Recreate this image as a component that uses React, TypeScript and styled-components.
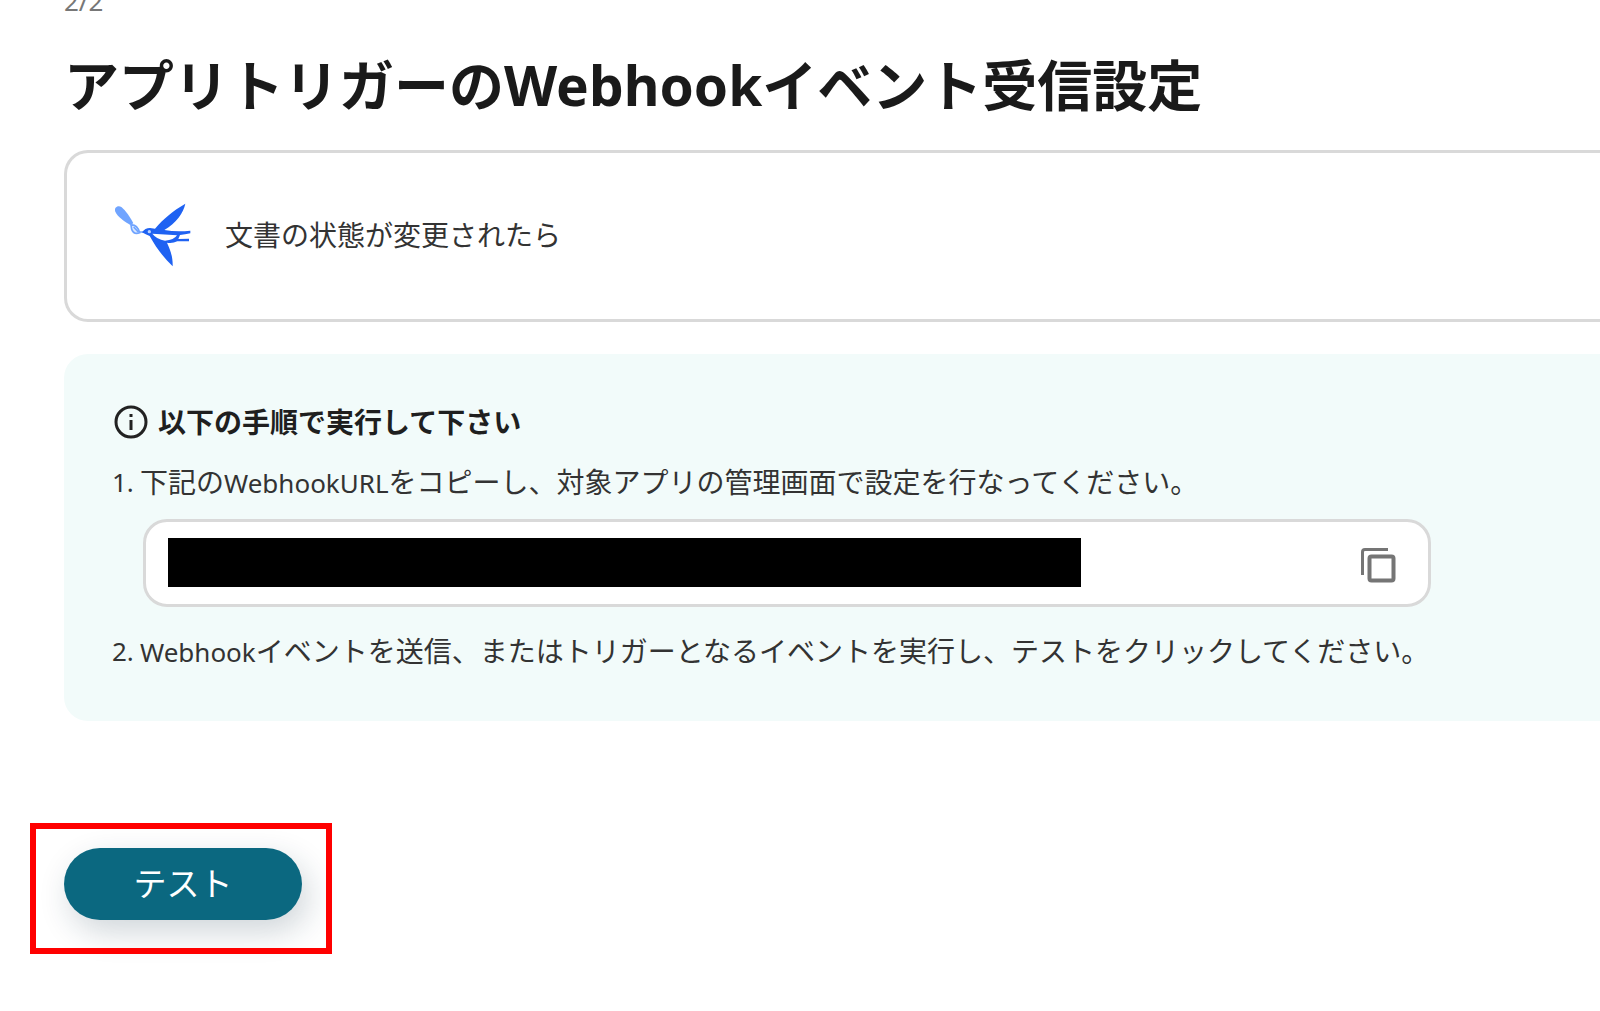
import React from "react";
import styled, { createGlobalStyle } from "styled-components";

const GlobalStyle = createGlobalStyle`
  *, *::before, *::after { box-sizing: border-box; }
  body {
    margin: 0;
    background: #fff;
    color: #333;
    font-family: "Noto Sans", "Noto Sans CJK JP", sans-serif;
    font-size: 28px;
    line-height: 40px;
  }
`;

const Page = styled.main`
  margin-top: -17px;
  padding: 0 0 64px 64px;
`;

const StepCount = styled.p`
  margin: 0;
  color: #777;
  font-size: 26px;
  line-height: 36px;
`;

const Title = styled.h1`
  margin: 30px 0 29px;
  color: #1a1a1a;
  font-size: 55px;
  font-weight: 700;
  line-height: 72px;
  white-space: nowrap;
`;

const Latin = styled.span`
  font-size: 26px;
`;

const TriggerCard = styled.section`
  display: flex;
  align-items: center;
  gap: 32px;
  padding: 48px 0 50px 46px;
  min-height: 171px;
  border: 3px solid #d9d9d9;
  border-right: 0;
  border-radius: 24px 0 0 24px;
`;

const Guide = styled.section`
  margin-top: 32px;
  padding: 48px 48px 49px 48px;
  border-radius: 24px 0 0 24px;
  background: #f2fbfa;
`;

const GuideHeading = styled.h2`
  display: flex;
  align-items: center;
  gap: 10px;
  margin: 0 0 20px;
  padding-left: 2px;
  color: #1f1f1f;
  font-size: 28px;
  font-weight: 700;
  line-height: 40px;
`;

const Steps = styled.ol`
  display: grid;
  gap: 24px;
  margin: 0;
  padding: 0;
  list-style: none;
`;

const Step = styled.li`
  display: grid;
  grid-template-columns: 28px 1fr;
`;

const StepNumber = styled.span`
  font-size: 26px;
`;

const StepText = styled.p`
  margin: 0;
  white-space: nowrap;
`;

const UrlField = styled.div`
  display: flex;
  align-items: center;
  justify-content: space-between;
  max-width: 1288px;
  height: 88px;
  margin-top: 16px;
  margin-left: 3px;
  padding: 0 32px 0 22px;
  border: 3px solid #d9d9d9;
  border-radius: 24px;
  background: #fff;
`;

const UrlInput = styled.input`
  flex: 0 1 913px;
  min-width: 0;
  height: 49px;
  margin-bottom: 2px;
  padding: 0;
  border: 0;
  background: #000;
  color: #000;
`;

const CopyButton = styled.button`
  display: flex;
  padding: 4px 0 0;
  border: 0;
  background: none;
  color: #757575;
  cursor: pointer;
`;

const Actions = styled.div`
  position: relative;
  width: fit-content;
  margin-top: 127px;

  &::after {
    content: "";
    position: absolute;
    inset: -25px -30px -34px -34px;
    border: 6px solid #f00;
    pointer-events: none;
  }
`;

const TestButton = styled.button`
  display: block;
  width: 238px;
  height: 72px;
  padding: 0 0 4px;
  border: 0;
  border-radius: 36px;
  background: #0b6880;
  box-shadow: 6px 12px 32px rgba(20, 50, 70, 0.2);
  color: #fff;
  font: 400 33px/40px "Noto Sans CJK JP", sans-serif;
  cursor: pointer;
`;

const BirdLogo = () => (
  <svg width="80" height="68" viewBox="40 36 240 204" aria-hidden="true">
    <path d="M47 68C42 56 55 47 66 55C78 65 92 86 101 103L92 108C77 99 54 84 47 68Z" fill="#70a4ff" />
    <path d="M94 108Q112 106 120 131Q103 138 96 121Z" fill="#dceaff" stroke="#70a4ff" strokeWidth="5" />
    <path d="M102 114L117 130M119 129H131" stroke="#70a4ff" strokeWidth="5" fill="none" />
    <path d="M127 130Q136 117 151 117L166 119C193 88 216 68 257 44C251 72 230 101 194 123Q231 130 272 125V133Q256 137 241 138L236 150L268 149V157L233 157Q218 164 202 161C212 182 220 205 219 232C190 204 169 175 150 141Q138 136 127 130Z" fill="#1f62f2" />
    <path d="M158 134Q195 136 232 139Q223 154 196 155Q171 151 158 134Z" fill="#fff" />
    <circle cx="149" cy="128" r="5" fill="#b9d1ff" />
  </svg>
);

const InfoIcon = () => (
  <svg width="34" height="34" viewBox="0 0 34 34" fill="none" aria-hidden="true">
    <circle cx="17" cy="17" r="15" stroke="#222" strokeWidth="3" />
    <path d="M17 15V25M17 9V12" stroke="#222" strokeWidth="3" />
  </svg>
);

const CopyIcon = () => (
  <svg width="36" height="36" viewBox="0 0 36 36" fill="none" stroke="currentColor" strokeWidth="3" aria-hidden="true">
    <path d="M2.5 28V5Q2.5 2.5 5 2.5H28" />
    <rect x="9.5" y="9.5" width="24" height="24" rx="2" strokeWidth="4" />
  </svg>
);

export default function App() {
  return (
    <>
      <GlobalStyle />
      <Page>
        <StepCount>2/2</StepCount>
        <Title>アプリトリガーのWebhookイベント受信設定</Title>
        <TriggerCard>
          <BirdLogo />
          <span>文書の状態が変更されたら</span>
        </TriggerCard>
        <Guide>
          <GuideHeading>
            <InfoIcon />
            以下の手順で実行して下さい
          </GuideHeading>
          <Steps>
            <Step>
              <StepNumber>1.</StepNumber>
              <div>
                <StepText>
                  下記の<Latin>WebhookURL</Latin>をコピーし、対象アプリの管理画面で設定を行なってください。
                </StepText>
                <UrlField>
                  <UrlInput type="text" readOnly aria-label="WebhookURL" />
                  <CopyButton type="button" aria-label="コピー">
                    <CopyIcon />
                  </CopyButton>
                </UrlField>
              </div>
            </Step>
            <Step>
              <StepNumber>2.</StepNumber>
              <StepText>
                <Latin>Webhook</Latin>イベントを送信、またはトリガーとなるイベントを実行し、テストをクリックしてください。
              </StepText>
            </Step>
          </Steps>
        </Guide>
        <Actions>
          <TestButton type="button">テスト</TestButton>
        </Actions>
      </Page>
    </>
  );
}
